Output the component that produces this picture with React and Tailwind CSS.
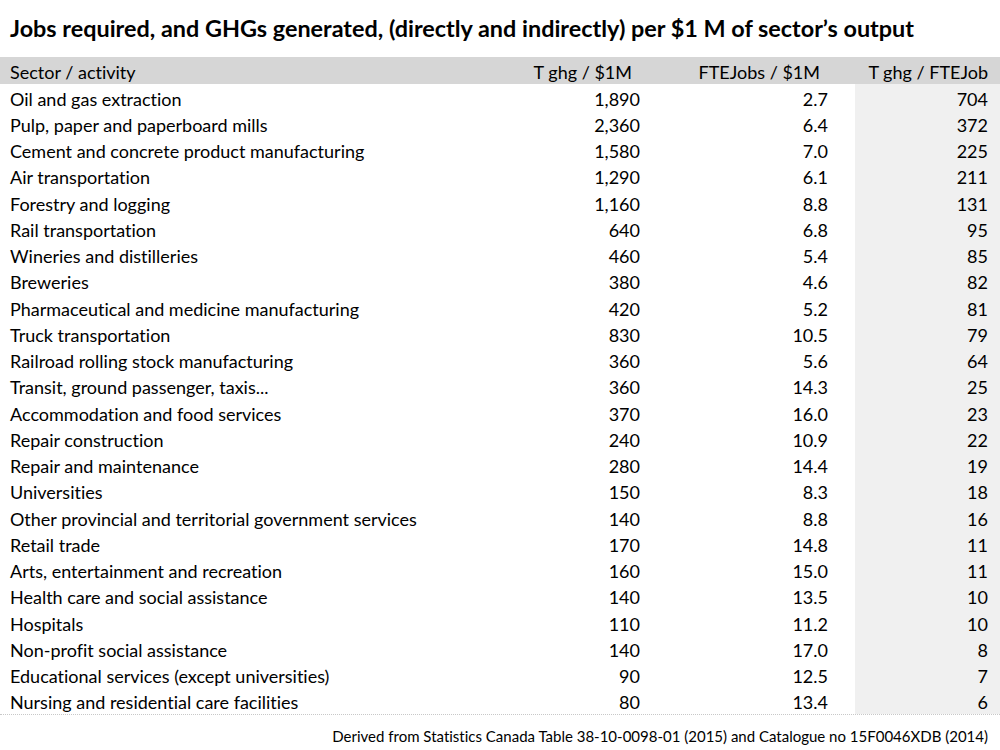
const rows = [
  ["Oil and gas extraction", "1,890", "2.7", "704"],
  ["Pulp, paper and paperboard mills", "2,360", "6.4", "372"],
  ["Cement and concrete product manufacturing", "1,580", "7.0", "225"],
  ["Air transportation", "1,290", "6.1", "211"],
  ["Forestry and logging", "1,160", "8.8", "131"],
  ["Rail transportation", "640", "6.8", "95"],
  ["Wineries and distilleries", "460", "5.4", "85"],
  ["Breweries", "380", "4.6", "82"],
  ["Pharmaceutical and medicine manufacturing", "420", "5.2", "81"],
  ["Truck transportation", "830", "10.5", "79"],
  ["Railroad rolling stock manufacturing", "360", "5.6", "64"],
  ["Transit, ground passenger, taxis...", "360", "14.3", "25"],
  ["Accommodation and food services", "370", "16.0", "23"],
  ["Repair construction", "240", "10.9", "22"],
  ["Repair and maintenance", "280", "14.4", "19"],
  ["Universities", "150", "8.3", "18"],
  ["Other provincial and territorial government services", "140", "8.8", "16"],
  ["Retail trade", "170", "14.8", "11"],
  ["Arts, entertainment and recreation", "160", "15.0", "11"],
  ["Health care and social assistance", "140", "13.5", "10"],
  ["Hospitals", "110", "11.2", "10"],
  ["Non-profit social assistance", "140", "17.0", "8"],
  ["Educational services (except universities)", "90", "12.5", "7"],
  ["Nursing and residential care facilities", "80", "13.4", "6"],
];

export default function App() {
  return (
    <div className="w-[1000px] h-[750px] bg-white text-black font-['Lato',sans-serif] [font-variant-ligatures:none] overflow-hidden">
      <h1 className="h-[57px] pl-[10px] pt-[14px] text-[23.4px] leading-[28px] font-bold whitespace-nowrap">
        Jobs required, and GHGs generated, (directly and indirectly) per $1 M of sector’s output
      </h1>
      <div className="border-b border-dotted border-[#c8c8c8]">
        <div className="flex h-[27px] items-center pt-[3px] bg-[#d6d6d6] text-[18px]">
          <div className="w-[500px] pl-[10px]">Sector / activity</div>
          <div className="w-[132px] text-right whitespace-nowrap">T ghg / $1M</div>
          <div className="w-[188px] text-right whitespace-nowrap">FTEJobs / $1M</div>
          <div className="w-[168px] text-right whitespace-nowrap">T ghg / FTEJob</div>
        </div>
        {rows.map((r) => (
          <div key={r[0]} className="flex h-[26.25px] items-center text-[18px]">
            <div className="w-[560px] pl-[10px] pt-[4px] whitespace-nowrap">{r[0]}</div>
            <div className="w-[80px] pt-[4px] text-right">{r[1]}</div>
            <div className="w-[188px] pt-[4px] text-right">{r[2]}</div>
            <div className="ml-[27px] w-[145px] h-full flex items-center justify-end pt-[4px] pr-[12px] bg-[#f0f0f0]">{r[3]}</div>
          </div>
        ))}
      </div>
      <div className="pr-[12px] pt-[10px] text-right text-[15px] whitespace-nowrap">
        Derived from Statistics Canada Table 38-10-0098-01 (2015) and Catalogue no 15F0046XDB (2014)
      </div>
    </div>
  );
}
